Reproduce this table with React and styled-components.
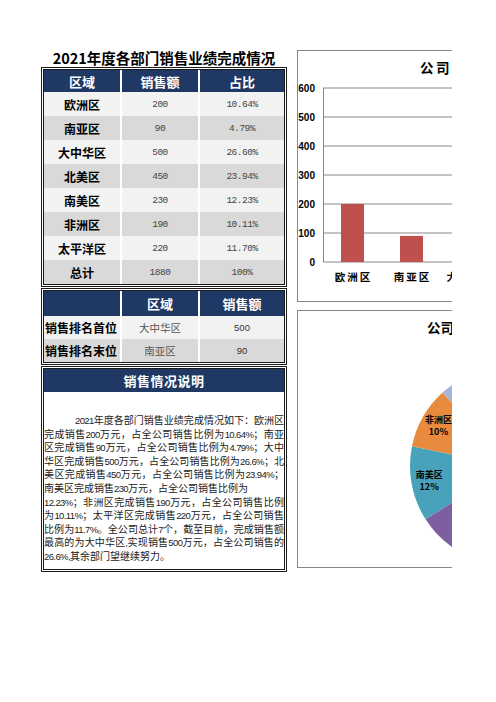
import React from 'react';
import styled, { createGlobalStyle } from 'styled-components';

const GlobalStyle = createGlobalStyle`
  html, body {
    margin: 0;
    padding: 0;
    background: #fff;
  }
  body {
    font-family: "Noto Sans CJK SC", "Liberation Sans", sans-serif;
  }
`;

const NAVY = '#1f3864';
const LIGHT = '#f2f2f2';
const DARK = '#d9d9d9';

const Page = styled.div`
  display: flex;
  align-items: flex-start;
  width: 452px;
  height: 702px;
  overflow: hidden;
  background: #fff;
`;

const LeftCol = styled.div`
  display: flex;
  flex-direction: column;
  flex-shrink: 0;
  width: 246px;
  margin: 49px 0 0 41px;
`;

const Title = styled.div`
  height: 18px;
  line-height: 18px;
  font-size: 14.5px;
  font-weight: 700;
  color: #000;
  text-align: center;
  white-space: nowrap;
`;

const Frame = styled.div`
  border: 3px double #1a1a1a;
  margin-top: ${p => p.$gap || 0}px;
  background: #fff;
`;

const Grid = styled.div`
  display: grid;
  grid-template-columns: 76px 76px 84px;
  column-gap: 2px;
  background: #fff;
`;

const HeadCell = styled.div`
  height: ${p => p.$h}px;
  background: ${NAVY};
  color: #fff;
  font-size: 13px;
  font-weight: 700;
  display: flex;
  align-items: center;
  justify-content: center;
`;

const Cell = styled.div`
  height: ${p => p.$h}px;
  background: ${p => (p.$alt ? DARK : LIGHT)};
  display: flex;
  align-items: center;
  justify-content: ${p => (p.$left ? 'flex-start' : 'center')};
  padding-left: ${p => (p.$left ? 1 : 0)}px;
`;

const Name = styled.span`
  font-size: 12px;
  font-weight: 700;
  color: #000;
  white-space: nowrap;
`;

const Value = styled.span`
  font-family: "Liberation Mono", monospace;
  font-size: 9.5px;
  letter-spacing: -0.5px;
  color: #444;
`;

const Place = styled.span`
  font-size: 10.5px;
  color: #555;
`;

const Amount = styled.span`
  font-family: "Liberation Sans", sans-serif;
  font-size: 9.5px;
  color: #333;
`;

const NoteHead = styled.div`
  height: 23px;
  background: ${NAVY};
  color: #fff;
  font-size: 13px;
  font-weight: 700;
  letter-spacing: 0.5px;
  display: flex;
  align-items: center;
  justify-content: center;
`;

const NoteBody = styled.div`
  height: 177px;
  box-sizing: border-box;
  padding-top: 21px;
  background: #fff;
`;

const Line = styled.div`
  height: 13.6px;
  line-height: 13.6px;
  font-size: 10px;
  color: #222;
  white-space: nowrap;
  text-align: ${p => (p.$full ? 'justify' : 'left')};
  text-align-last: ${p => (p.$full ? 'justify' : 'left')};
  padding-left: ${p => p.$indent || 0}px;
`;

const Num = styled.span`
  font-family: "Liberation Sans", sans-serif;
  font-size: 9.5px;
  letter-spacing: -0.6px;
`;

const RightCol = styled.div`
  display: flex;
  flex-direction: column;
  flex-shrink: 0;
  gap: 8px;
  margin: 50px 0 0 10px;
`;

const ChartBox = styled.div`
  width: 470px;
  height: ${p => p.$h}px;
  box-sizing: border-box;
  border: 1px solid #888;
  background: #fff;
`;

const ChartTitle = styled.div`
  margin-top: ${p => p.$top}px;
  padding-left: ${p => p.$left}px;
  height: 16px;
  line-height: 16px;
  font-size: 13.5px;
  font-weight: 700;
  letter-spacing: ${p => p.$ls}px;
  color: #000;
  white-space: nowrap;
`;

const Plot = styled.svg`
  display: block;
`;

const regions = [
  { name: '欧洲区', sales: 200, pct: '10.64%' },
  { name: '南亚区', sales: 90, pct: '4.79%' },
  { name: '大中华区', sales: 500, pct: '26.60%' },
  { name: '北美区', sales: 450, pct: '23.94%' },
  { name: '南美区', sales: 230, pct: '12.23%' },
  { name: '非洲区', sales: 190, pct: '10.11%' },
  { name: '太平洋区', sales: 220, pct: '11.70%' }
];

const total = regions.reduce((s, r) => s + r.sales, 0);

// text split into the same lines as the sheet; digits get the narrow span
const noteLines = [
  { text: '2021年度各部门销售业绩完成情况如下：欧洲区', full: true, indent: 31 },
  { text: '完成销售200万元，占全公司销售比例为10.64%；南亚', full: true },
  { text: '区完成销售90万元，占全公司销售比例为4.79%；大中', full: true },
  { text: '华区完成销售500万元，占全公司销售比例为26.6%；北', full: true },
  { text: '美区完成销售450万元，占全公司销售比例为23.94%；', full: true },
  { text: '南美区完成销售230万元，占全公司销售比例为' },
  { text: '12.23%；非洲区完成销售190万元，占全公司销售比例', full: true },
  { text: '为10.11%；太平洋区完成销售220万元，占全公司销售', full: true },
  { text: '比例为11.7%。全公司总计7个，截至目前，完成销售额', full: true },
  { text: '最高的为大中华区,实现销售500万元，占全公司销售的', full: true },
  { text: '26.6%,其余部门望继续努力。' }
];

function renderText(text) {
  return text.split(/([0-9.,%]+)/).map((part, i) =>
    /[0-9.,%]/.test(part) ? <Num key={i}>{part}</Num> : part
  );
}

const PIE_COLORS = ['#4f81bd', '#c0504d', '#9bbb59', '#7d5fa0', '#48a3ba', '#e98b3e', '#a5b5d7'];

function BarChart() {
  const base = 187;
  const step = 29 / 100;
  const ticks = [600, 500, 400, 300, 200, 100, 0];
  return (
    <Plot width="468" height="226">
      {ticks.map(t => {
        const y = base - t * step;
        return (
          <g key={t}>
            <line x1="25" x2="468" y1={y} y2={y} stroke="#888" strokeWidth="1" />
            <text
              x="17"
              y={y + 3.5}
              textAnchor="end"
              fontFamily="Liberation Sans, sans-serif"
              fontWeight="700"
              fontSize="10"
              fill="#000"
            >
              {t}
            </text>
          </g>
        );
      })}
      <line x1="25.5" x2="25.5" y1={base - 600 * step} y2={base} stroke="#888" strokeWidth="1" />
      {regions.map((r, i) => {
        const cx = 54.5 + i * 59;
        const h = r.sales * step;
        return (
          <g key={r.name}>
            <rect x={cx - 11.5} y={base - h} width="23" height={h} fill="#c0504d" />
            <text
              x={cx + 1}
              y="206"
              textAnchor="middle"
              fontFamily="Noto Sans CJK SC, sans-serif"
              fontWeight="700"
              fontSize="10.5"
              letterSpacing="2"
              fill="#000"
            >
              {r.name}
            </text>
          </g>
        );
      })}
    </Plot>
  );
}

function PieChart() {
  const CX = 211;
  const CY = 131;
  const R = 99;
  const pt = (a, rr) => [
    CX + rr * Math.sin((a * Math.PI) / 180),
    CY - rr * Math.cos((a * Math.PI) / 180)
  ];
  let start = 0;
  const slices = regions.map((r, i) => {
    const sweep = (r.sales / total) * 360;
    const end = start + sweep;
    const [x0, y0] = pt(start, R);
    const [x1, y1] = pt(end, R);
    const [lx, ly] = pt(start + sweep / 2, R * 0.82);
    const d = `M ${CX} ${CY} L ${x0} ${y0} A ${R} ${R} 0 ${sweep > 180 ? 1 : 0} 1 ${x1} ${y1} Z`;
    start = end;
    return { ...r, d, lx, ly, color: PIE_COLORS[i], label: `${Math.round((r.sales / total) * 100)}%` };
  });
  return (
    <Plot width="468" height="232">
      {slices.map(s => (
        <path key={s.name} d={s.d} fill={s.color} />
      ))}
      {slices.map(s => (
        <text
          key={s.name}
          textAnchor="middle"
          fontFamily="Noto Sans CJK SC, sans-serif"
          fontWeight="700"
          fontSize="9"
          fill="#000"
        >
          <tspan x={s.lx} y={s.ly - 3}>{s.name}</tspan>
          <tspan x={s.lx} y={s.ly + 9}>{s.label}</tspan>
        </text>
      ))}
    </Plot>
  );
}

export default function App() {
  return (
    <>
      <GlobalStyle />
      <Page>
        <LeftCol>
          <Title>2021年度各部门销售业绩完成情况</Title>

          <Frame>
            <Grid>
              <HeadCell $h={22}>区域</HeadCell>
              <HeadCell $h={22}>销售额</HeadCell>
              <HeadCell $h={22}>占比</HeadCell>
              {regions.map((r, i) => (
                <React.Fragment key={r.name}>
                  <Cell $h={24} $alt={i % 2 === 1}><Name>{r.name}</Name></Cell>
                  <Cell $h={24} $alt={i % 2 === 1}><Value>{r.sales}</Value></Cell>
                  <Cell $h={24} $alt={i % 2 === 1}><Value>{r.pct}</Value></Cell>
                </React.Fragment>
              ))}
              <Cell $h={24} $alt><Name>总计</Name></Cell>
              <Cell $h={24} $alt><Value>{total}</Value></Cell>
              <Cell $h={24} $alt><Value>100%</Value></Cell>
            </Grid>
          </Frame>

          <Frame $gap={1}>
            <Grid>
              <HeadCell $h={25} />
              <HeadCell $h={25}>区域</HeadCell>
              <HeadCell $h={25}>销售额</HeadCell>
              <Cell $h={23} $left><Name>销售排名首位</Name></Cell>
              <Cell $h={23}><Place>大中华区</Place></Cell>
              <Cell $h={23}><Amount>500</Amount></Cell>
              <Cell $h={23} $left $alt><Name>销售排名末位</Name></Cell>
              <Cell $h={23} $alt><Place>南亚区</Place></Cell>
              <Cell $h={23} $alt><Amount>90</Amount></Cell>
            </Grid>
          </Frame>

          <Frame $gap={1}>
            <NoteHead>销售情况说明</NoteHead>
            <NoteBody>
              {noteLines.map((l, i) => (
                <Line key={i} $full={l.full} $indent={l.indent}>
                  {renderText(l.text)}
                </Line>
              ))}
            </NoteBody>
          </Frame>
        </LeftCol>

        <RightCol>
          <ChartBox $h={252}>
            <ChartTitle $top={8} $left={122} $ls={2.5}>公司各部门销售额</ChartTitle>
            <BarChart />
          </ChartBox>
          <ChartBox $h={258}>
            <ChartTitle $top={8} $left={129} $ls={0}>公司各部门销售占比</ChartTitle>
            <PieChart />
          </ChartBox>
        </RightCol>
      </Page>
    </>
  );
}
